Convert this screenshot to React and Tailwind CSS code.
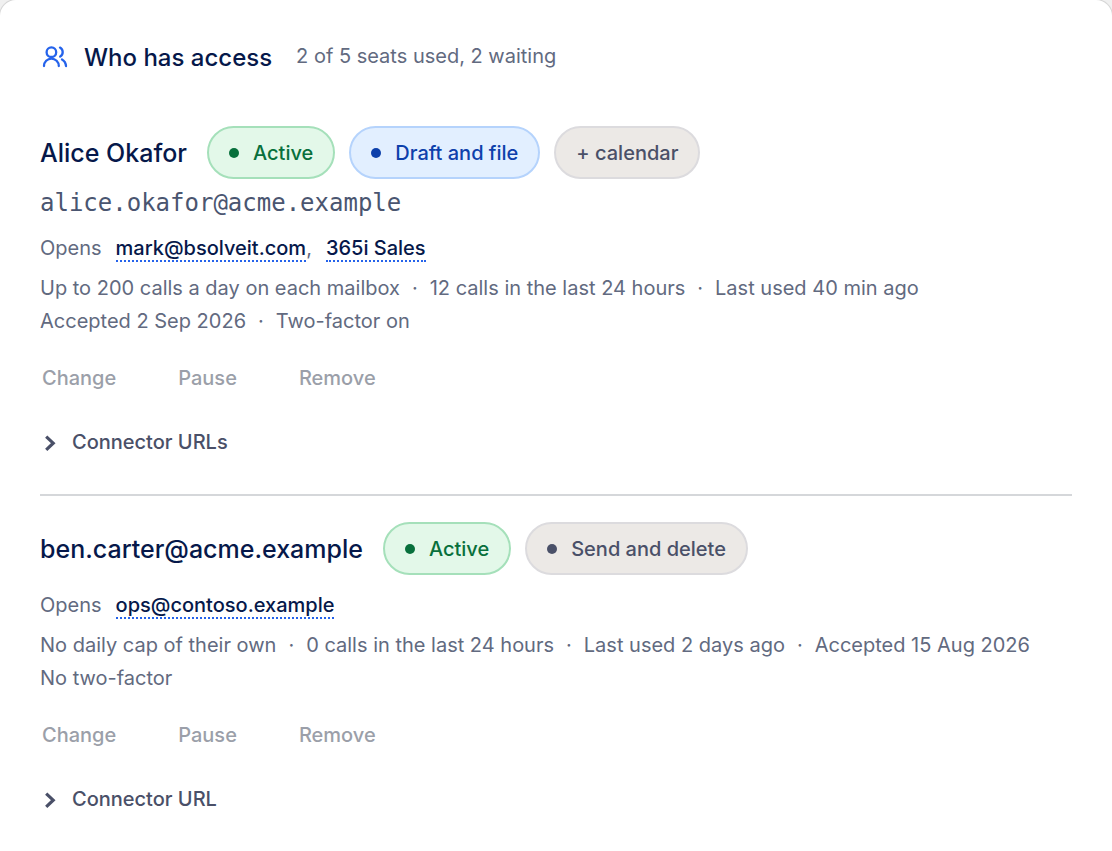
const people = [
  {
    name: 'Alice Okafor',
    email: 'alice.okafor@acme.example',
    badges: [
      { label: 'Active', tone: 'green', dot: true },
      { label: 'Draft and file', tone: 'blue', dot: true },
      { label: '+ calendar', tone: 'gray', dot: false },
    ],
    mailboxes: ['mark@bsolveit.com', '365i Sales'],
    facts: [
      ['Up to 200 calls a day on each mailbox', '12 calls in the last 24 hours', 'Last used 40 min ago'],
      ['Accepted 2 Sep 2026', 'Two-factor on'],
    ],
    connector: 'Connector URLs',
  },
  {
    name: 'ben.carter@acme.example',
    badges: [
      { label: 'Active', tone: 'green', dot: true },
      { label: 'Send and delete', tone: 'gray', dot: true },
    ],
    mailboxes: ['ops@contoso.example'],
    facts: [
      ['No daily cap of their own', '0 calls in the last 24 hours', 'Last used 2 days ago', 'Accepted 15 Aug 2026'],
      ['No two-factor'],
    ],
    connector: 'Connector URL',
  },
];

const tones = {
  green: 'bg-[#e3f8e9] border-[#a5e0ba] text-[#08703c]',
  blue: 'bg-[#e2efff] border-[#b5d3fc] text-[#0d40ab]',
  gray: 'bg-[#ece9e6] border-[#dcdbde] text-[#4a5068]',
};

function UsersIcon({ className }) {
  return (
    <svg
      className={className}
      viewBox="0 0 28 28"
      fill="none"
      stroke="currentColor"
      strokeWidth="2.3"
      strokeLinecap="round"
      aria-hidden="true"
    >
      <circle cx="11.4" cy="8.2" r="4.8" />
      <path d="M4 22a7.4 7.4 0 0 1 14.8 0" />
      <path d="M20 3.6a5.2 5.2 0 0 1 .2 9" />
      <path d="M22 15.4c2.4 1.4 3.8 3.7 4 6.6" />
    </svg>
  );
}

function ChevronIcon({ className }) {
  return (
    <svg className={className} viewBox="0 0 20 20" fill="none" stroke="currentColor" strokeWidth="3.2" aria-hidden="true">
      <path d="M6.2 3.6 13.2 10.2 6.2 16.8" />
    </svg>
  );
}

function Badge({ label, tone, dot }) {
  return (
    <span
      className={`inline-flex h-[53px] items-center gap-[14px] rounded-full border-2 px-5 text-xl font-medium ${tones[tone]}`}
    >
      {dot && <span className="size-[10px] rounded-full bg-current" />}
      {label}
    </span>
  );
}

function Person({ person }) {
  return (
    <li className="border-b-2 border-[#d5d7da] pt-[26px] pb-[35px] last:border-b-0">
      <div className="flex flex-wrap items-center gap-x-5">
        <h3 className="text-[25px] leading-9 font-medium text-[#06184a]">{person.name}</h3>
        <div className="flex flex-wrap gap-[14px]">
          {person.badges.map((badge) => (
            <Badge key={badge.label} {...badge} />
          ))}
        </div>
      </div>

      {person.email && (
        <p className="mt-1 font-['DejaVu_Sans_Mono',monospace] text-2xl leading-10 text-[#4a5570]">
          {person.email}
        </p>
      )}

      <p
        className={`flex flex-wrap items-center gap-x-[14px] text-xl leading-[33px] text-[#626a80] ${person.email ? 'mt-[9px]' : 'mt-[14px]'}`}
      >
        <span>Opens</span>
        {person.mailboxes.map((mailbox, i) => (
          <span key={mailbox}>
            <a href="#mailbox" className="border-b-2 border-dotted border-[#2563eb] font-medium text-[#06184a]">
              {mailbox}
            </a>
            {i < person.mailboxes.length - 1 && ','}
          </span>
        ))}
      </p>

      <div className="mt-[7px] text-xl leading-[33px] text-[#626a80]">
        {person.facts.map((line) => (
          <p key={line[0]} className="flex flex-wrap gap-x-3">
            {line.map((fact, i) => (
              <span key={fact} className="flex gap-3">
                {i > 0 && <span>·</span>}
                {fact}
              </span>
            ))}
          </p>
        ))}
      </div>

      <div className="mt-6 flex gap-[62px] px-0.5 text-xl leading-[33px] font-medium text-[#9b9fa9]">
        <button type="button">Change</button>
        <button type="button">Pause</button>
        <button type="button">Remove</button>
      </div>

      <button
        type="button"
        className="mt-[31px] flex items-center gap-3 text-xl leading-[33px] font-medium text-[#4a5068]"
      >
        <ChevronIcon className="size-5" />
        {person.connector}
      </button>
    </li>
  );
}

export default function App() {
  return (
    <div className="min-h-screen bg-[#f0f0f0] font-['Inter',sans-serif]">
      <section className="min-h-screen rounded-t-2xl bg-white px-10 pt-10 shadow-[0_0_0_1px_#d6d6d6]">
        <header className="flex items-center">
          <UsersIcon className="mr-4 size-7 text-[#2563eb]" />
          <h2 className="mr-6 text-2xl leading-9 font-medium text-[#06184a]">Who has access</h2>
          <p className="pb-1 text-xl text-[#626a80]">2 of 5 seats used, 2 waiting</p>
        </header>
        <ul className="mt-6">
          {people.map((person) => (
            <Person key={person.name} person={person} />
          ))}
        </ul>
      </section>
    </div>
  );
}
